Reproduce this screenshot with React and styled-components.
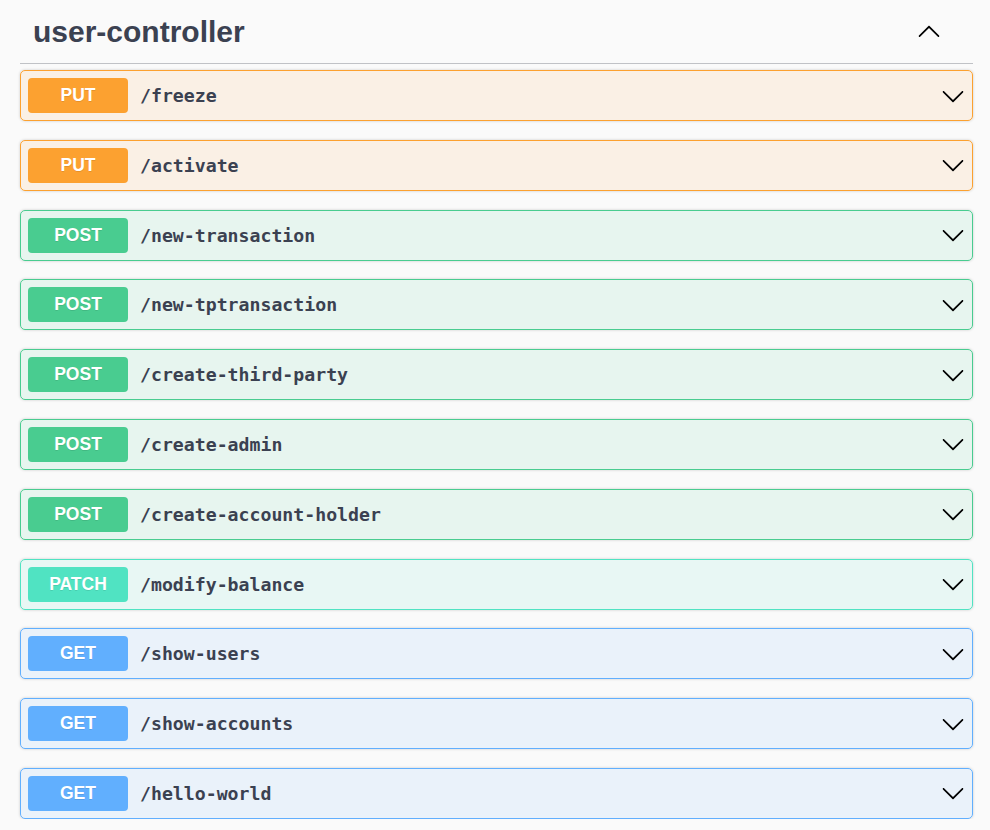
import styled, { createGlobalStyle } from "styled-components";

const GlobalStyle = createGlobalStyle`
  html, body {
    margin: 0;
    padding: 0;
    background: #fafafa;
  }
`;

const METHODS = {
  put: { color: "#fca130", bg: "rgba(252, 161, 48, 0.1)" },
  post: { color: "#49cc90", bg: "rgba(73, 204, 144, 0.1)" },
  patch: { color: "#50e3c2", bg: "rgba(80, 227, 194, 0.1)" },
  get: { color: "#61affe", bg: "rgba(97, 175, 254, 0.1)" },
};

const OPERATIONS = [
  { method: "put", path: "/freeze" },
  { method: "put", path: "/activate" },
  { method: "post", path: "/new-transaction" },
  { method: "post", path: "/new-tptransaction" },
  { method: "post", path: "/create-third-party" },
  { method: "post", path: "/create-admin" },
  { method: "post", path: "/create-account-holder" },
  { method: "patch", path: "/modify-balance" },
  { method: "get", path: "/show-users" },
  { method: "get", path: "/show-accounts" },
  { method: "get", path: "/hello-world" },
];

const Page = styled.div`
  padding: 0 17px 0 20px;
  font-family: "Liberation Sans", Arial, sans-serif;
`;

const TagHeader = styled.div`
  display: flex;
  align-items: center;
  justify-content: space-between;
  height: 63px;
  padding: 0 32px 0 13px;
  border-bottom: 1px solid rgba(59, 65, 81, 0.3);
  margin-bottom: 6px;
`;

const TagTitle = styled.h3`
  margin: 0;
  font-size: 30px;
  font-weight: 700;
  color: #3b4151;
`;

const OpList = styled.div`
  display: flex;
  flex-direction: column;
  gap: 18.8px;
`;

const OpBlock = styled.div`
  display: flex;
  align-items: center;
  padding: 7px;
  border: 1px solid ${({ $color }) => $color};
  background: ${({ $bg }) => $bg};
  border-radius: 5px;
  box-shadow: 0 0 3px rgba(0, 0, 0, 0.19);
`;

const MethodBadge = styled.span`
  flex: none;
  width: 100px;
  height: 35px;
  display: flex;
  align-items: center;
  justify-content: center;
  border-radius: 4px;
  background: ${({ $color }) => $color};
  color: #fff;
  font-size: 17.5px;
  font-weight: 700;
  text-shadow: 0 1px 0 rgba(0, 0, 0, 0.1);
`;

const OpPath = styled.span`
  flex: 1;
  padding-left: 12px;
  font-family: "DejaVu Sans Mono", "Liberation Mono", monospace;
  font-size: 18.2px;
  font-weight: 700;
  color: #3b4151;
`;

const Arrow = styled.svg`
  flex: none;
  width: 24px;
  height: 24px;
  fill: #000;
  transform: ${({ $up }) => ($up ? "rotate(180deg)" : "none")};
`;

function Chevron({ up }) {
  return (
    <Arrow $up={up} viewBox="0 0 20 20">
      <path d="M17.418 6.109c.272-.268.709-.268.979 0s.271.701 0 .969l-7.908 7.83c-.27.268-.707.268-.979 0l-7.908-7.83c-.27-.268-.27-.701 0-.969.271-.268.709-.268.979 0L10 13.25l7.418-7.141z" />
    </Arrow>
  );
}

export default function App() {
  return (
    <Page>
      <GlobalStyle />
      <TagHeader>
        <TagTitle>user-controller</TagTitle>
        <Chevron up />
      </TagHeader>
      <OpList>
        {OPERATIONS.map(({ method, path }) => (
          <OpBlock
            key={path}
            $color={METHODS[method].color}
            $bg={METHODS[method].bg}
          >
            <MethodBadge $color={METHODS[method].color}>
              {method.toUpperCase()}
            </MethodBadge>
            <OpPath>{path}</OpPath>
            <Chevron />
          </OpBlock>
        ))}
      </OpList>
    </Page>
  );
}
